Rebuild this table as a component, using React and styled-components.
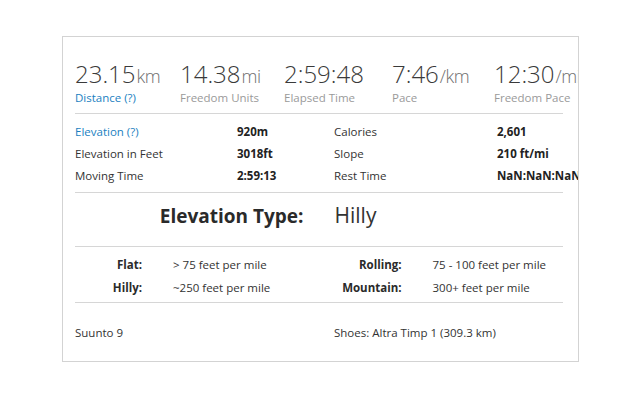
import React from "react";
import styled, { createGlobalStyle } from "styled-components";

const GlobalStyle = createGlobalStyle`
  html, body {
    margin: 0;
    padding: 0;
    background: #fff;
  }

  body {
    font-family: "Open Sans", "Noto Sans", Arial, sans-serif;
    color: #333;
  }
`;

const stats = [
  { value: "23.15", unit: "km", label: "Distance (?)", link: true },
  { value: "14.38", unit: "mi", label: "Freedom Units" },
  { value: "2:59:48", unit: "", label: "Elapsed Time" },
  { value: "7:46", unit: "/km", label: "Pace" },
  { value: "12:30", unit: "/mi", label: "Freedom Pace" },
];

const details = [
  ["Elevation (?)", "920m", "Calories", "2,601"],
  ["Elevation in Feet", "3018ft", "Slope", "210 ft/mi"],
  ["Moving Time", "2:59:13", "Rest Time", "NaN:NaN:NaN"],
];

const types = [
  ["Flat:", "> 75 feet per mile", "Rolling:", "75 - 100 feet per mile"],
  ["Hilly:", "~250 feet per mile", "Mountain:", "300+ feet per mile"],
];

function App() {
  return (
    <>
      <GlobalStyle />
      <Panel>
        <StatsRow>
          {stats.map((stat) => (
            <Stat key={stat.label}>
              <StatValue>
                {stat.value}
                {stat.unit && <Unit>{stat.unit}</Unit>}
              </StatValue>
              <StatLabel $link={stat.link}>{stat.label}</StatLabel>
            </Stat>
          ))}
        </StatsRow>

        <DetailTable>
          {details.map((row) => (
            <React.Fragment key={row[0]}>
              <DetailLabel $link={row[0] === "Elevation (?)"}>{row[0]}</DetailLabel>
              <DetailValue>{row[1]}</DetailValue>
              <DetailLabel>{row[2]}</DetailLabel>
              <DetailValue>{row[3]}</DetailValue>
            </React.Fragment>
          ))}
        </DetailTable>

        <ElevationType>
          <TypeTitle>Elevation Type:</TypeTitle>
          <TypeName>Hilly</TypeName>
        </ElevationType>

        <TypeLegend>
          {types.map((row) => (
            <React.Fragment key={row[0]}>
              <LegendTerm>{row[0]}</LegendTerm>
              <LegendText>{row[1]}</LegendText>
              <LegendTerm>{row[2]}</LegendTerm>
              <LegendText>{row[3]}</LegendText>
            </React.Fragment>
          ))}
        </TypeLegend>

        <Footer>
          <span>Suunto 9</span>
          <span>Shoes: Altra Timp 1 (309.3 km)</span>
        </Footer>
      </Panel>
    </>
  );
}

const Panel = styled.div`
  box-sizing: border-box;
  width: 517px;
  margin: 36px 0 0 62px;
  padding: 0 15px 0 12px;
  border: 1px solid #d3d3d3;
  overflow: hidden;
  font-size: 11.5px;
`;

const StatsRow = styled.div`
  display: grid;
  grid-template-columns: 105px 104px 108px 102px max-content;
  padding: 21px 0 7px;
  border-bottom: 1px solid #d6d6d6;
`;

const Stat = styled.div`
  white-space: nowrap;
`;

const StatValue = styled.div`
  height: 32px;
  font-size: 24px;
  font-weight: 300;
  line-height: 32px;
  color: #3a3a3a;
`;

const Unit = styled.span`
  font-size: 18px;
  line-height: 1;
  letter-spacing: -0.4px;
  color: #6f6f6f;
  margin-left: 1px;
`;

const StatLabel = styled.div`
  font-size: 11.5px;
  line-height: 16px;
  color: ${({ $link }) => ($link ? "#1b7fc1" : "#9a9a9a")};
`;

const DetailTable = styled.div`
  display: grid;
  grid-template-columns: 162px 97px 163px 1fr;
  grid-auto-rows: 22px;
  align-items: center;
  padding: 6px 0;
  border-bottom: 1px solid #d6d6d6;
`;

const DetailLabel = styled.div`
  color: ${({ $link }) => ($link ? "#1b7fc1" : "#333")};
`;

const DetailValue = styled.div`
  font-weight: 700;
  color: #222;
  white-space: nowrap;
`;

const ElevationType = styled.div`
  display: grid;
  grid-template-columns: 1fr 1fr;
  column-gap: 31px;
  align-items: baseline;
  padding: 7px 0 15px;
  line-height: 30px;
  border-bottom: 1px solid #d6d6d6;
`;

const TypeTitle = styled.div`
  text-align: right;
  font-size: 19px;
  font-weight: 700;
  color: #2a2a2a;
`;

const TypeName = styled.div`
  font-size: 21px;
  color: #333;
`;

const TypeLegend = styled.div`
  display: grid;
  grid-template-columns: 67px 1fr 67px 1fr;
  column-gap: 31px;
  row-gap: 1px;
  grid-auto-rows: 22px;
  align-items: center;
  padding: 6px 0 4px;
  border-bottom: 1px solid #d6d6d6;
`;

const LegendTerm = styled.div`
  text-align: right;
  font-weight: 700;
  color: #2a2a2a;
  white-space: nowrap;
`;

const LegendText = styled.div`
  color: #333;
  white-space: nowrap;
`;

const Footer = styled.div`
  display: grid;
  grid-template-columns: 259px 1fr;
  line-height: 22px;
  padding: 19px 0 17px;
  color: #333;
`;

export default App;
